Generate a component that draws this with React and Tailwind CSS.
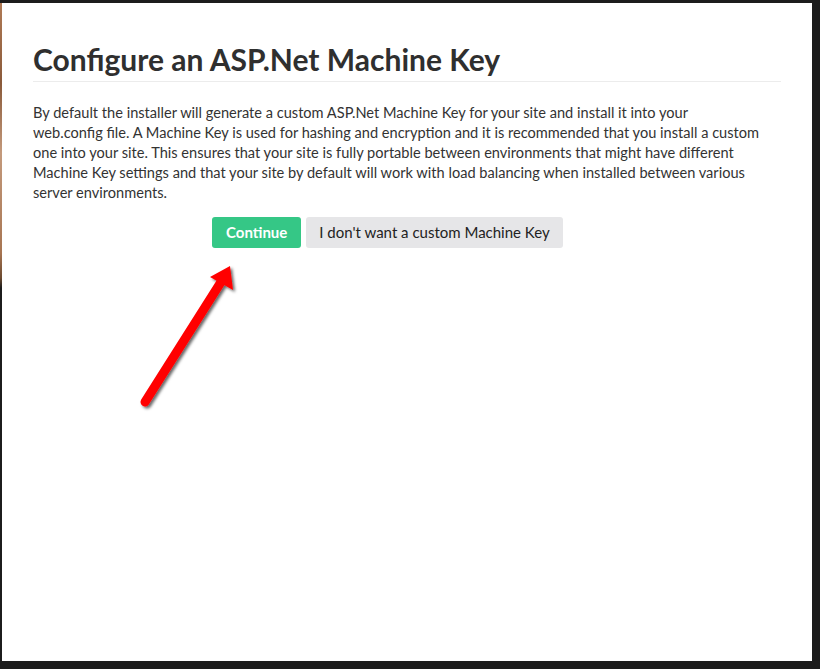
export default function App() {
  return (
    <div className="flex h-[669px] w-[820px] bg-[#1c1c1c] pt-[3px] pr-[8px] pb-[8px] font-['Lato',sans-serif]">
      {/* sliver of the photo behind the dialog */}
      <div className="w-[2px] shrink-0 bg-[linear-gradient(to_bottom,#b07a55_0px,#8a5a3a_80px,#c49a7c_150px,#a77552_250px,#6b4a30_275px,#1c1c1c_285px)]" />
      <div className="relative flex-1 bg-white px-[31px] pt-[35px]">
        <h1 className="text-[30px] font-bold leading-[43px] text-[#2f2f2f]">
          Configure an ASP.Net Machine Key
        </h1>
        <div className="h-px w-full bg-[#ececec]" />
        <p className="mt-[21px] text-[14.6px] leading-[20px] text-[#333]">
          By default the installer will generate a custom ASP.Net Machine Key for your site and install it into your
          <br />
          web.config file. A Machine Key is used for hashing and encryption and it is recommended that you install a custom
          <br />
          one into your site. This ensures that your site is fully portable between environments that might have different
          <br />
          Machine Key settings and that your site by default will work with load balancing when installed between various
          <br />
          server environments.
        </p>
        <div className="mt-[14px] flex gap-[5px] pl-[179px]">
          <button className="h-[31px] rounded-[3px] bg-[#35c786] px-[14px] text-[15px] font-bold text-white">
            Continue
          </button>
          <button className="h-[31px] rounded-[3px] bg-[#e6e6e8] px-[13px] text-[15px] text-[#222]">
            I don't want a custom Machine Key
          </button>
        </div>

        {/* red annotation arrow */}
        <svg
          className="absolute left-[128px] top-[249px]"
          width="120"
          height="170"
          viewBox="0 0 120 170"
        >
          <defs>
            <filter id="sh" x="-30%" y="-30%" width="160%" height="160%">
              <feDropShadow dx="2" dy="2" stdDeviation="1.5" floodColor="#000" floodOpacity="0.6" />
            </filter>
          </defs>
          <g filter="url(#sh)">
            <line x1="15" y1="150" x2="91" y2="30" stroke="#ff0000" strokeWidth="9" strokeLinecap="round" />
            <polygon points="100,14 103,38 80,25" fill="#ff0000" />
          </g>
        </svg>
      </div>
    </div>
  )
}
